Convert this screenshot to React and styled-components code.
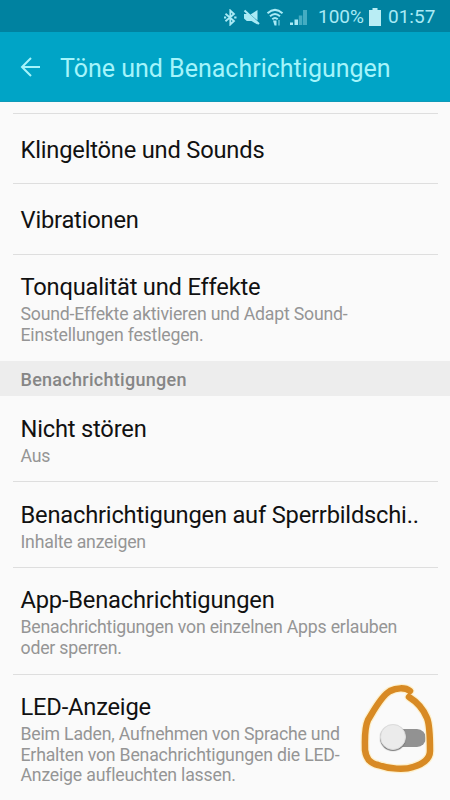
import React from 'react';
import styled, { createGlobalStyle } from 'styled-components';

const GlobalStyle = createGlobalStyle`
  *,
  *::before,
  *::after {
    box-sizing: border-box;
  }

  body {
    margin: 0;
    background: #fafafa;
    font-family: Roboto, 'Liberation Sans', sans-serif;
  }
`;

const StyledScreen = styled.div`
  display: flex;
  flex-direction: column;
  width: 450px;
  height: 800px;
  overflow: hidden;
  background: #fafafa;
`;

const StyledStatusBar = styled.header`
  display: flex;
  flex: none;
  align-items: center;
  justify-content: flex-end;
  height: 32px;
  padding: 2px 14px 0 0;
  background: #0082a0;
  color: #a9eaf5;
  font-size: 19px;
  line-height: 30px;

  svg {
    display: block;
    flex: none;
  }
`;

const StyledIcons = styled.div`
  display: flex;
  align-items: center;
  gap: 6px;
`;

const StyledStatusText = styled.span`
  width: ${({ $width }) => $width}px;
  margin-left: ${({ $gap }) => $gap}px;
  white-space: nowrap;
`;

const StyledAppBar = styled.div`
  display: flex;
  flex: none;
  align-items: center;
  height: 70px;
  padding: 1px 0 0 20px;
  background: #00a4c6;
  border-bottom: 1px solid #0f9ab8;
  color: #a5f4fb;

  svg {
    display: block;
    flex: none;
  }

  h1 {
    margin: 3px 0 0 19px;
    font-size: 25px;
    font-weight: 400;
    line-height: 30px;
    white-space: nowrap;
  }
`;

const StyledList = styled.ul`
  flex: none;
  margin: 0;
  padding: ${({ $pad }) => $pad || 0};
  list-style: none;
`;

const StyledRow = styled.li`
  display: flex;
  align-items: center;
  justify-content: space-between;
  margin: 0 12px 0 13px;
  padding: ${({ $single }) => ($single ? '21.6px 0 19.8px 7.5px' : '18.3px 0 14.7px 7.5px')};
  border-top: 1px solid ${({ $plain }) => ($plain ? 'transparent' : '#dedede')};
`;

const StyledText = styled.div`
  h2 {
    margin: 0;
    color: #111;
    font-size: 23.7px;
    font-weight: 400;
    letter-spacing: -0.2px;
    line-height: 28px;
    white-space: nowrap;
  }

  p {
    margin: 3px 0 0;
    color: #959595;
    font-size: 17.7px;
    letter-spacing: -0.2px;
    line-height: 20.7px;
    white-space: nowrap;
  }
`;

const StyledSection = styled.h3`
  flex: none;
  height: 35px;
  margin: 0;
  padding-left: 20.5px;
  background: #ededed;
  color: #868686;
  font-size: 18px;
  font-weight: 500;
  letter-spacing: 0.28px;
  line-height: 37px;
`;

const StyledSwitch = styled.div`
  position: relative;
  flex: none;
  width: 46px;
  height: 28px;
  margin: 0 12px 2px 0;
  padding: 5px 0 5px 12px;

  &::before {
    display: block;
    height: 18px;
    border-radius: 9px;
    background: #929292;
    content: '';
  }
`;

const StyledThumb = styled.span`
  position: absolute;
  top: 0;
  left: 0;
  width: 26px;
  height: 26px;
  border: 1px solid #dcdcdc;
  border-radius: 50%;
  background: #ebebeb;
  box-shadow: 0 1px 1px #777;
`;

const StyledScribble = styled.svg`
  position: absolute;
  top: -41px;
  left: -19px;
  overflow: visible;
`;

const StyledEnd = styled.div`
  flex: none;
  margin: 0 12px 0 13px;
  border-top: 1px solid #dedede;
`;

const BluetoothIcon = () => (
  <svg width="13" height="17" viewBox="0 0 13 17" fill="none" stroke="currentColor">
    <path d="M1.5 4.7 10 12 6.3 15.5V1.5L10 5 1.5 12.3" strokeWidth="1.8" />
    <path d="M0 8.5h2.2M10.2 8.5h2.3" strokeWidth="2" />
  </svg>
);

const MuteIcon = () => (
  <svg width="17" height="17" viewBox="0 0 17 17" fill="currentColor">
    <path d="M1 5h4L14.5 13.5V15.5L8.5 12H3.8L1 9.5Z" />
    <path d="M7.5 5.5 14.5 1v10.5Z" />
    <path d="M1.5 1.5 16 15" stroke="currentColor" strokeWidth="2" />
  </svg>
);

const WifiIcon = () => (
  <svg width="18" height="19" viewBox="0 0 18 19" fill="none" stroke="currentColor">
    <path d="M1.5 5.3q7.5-6.8 15 0M4 8.3q5-4.5 10 0M6.3 11.2q2.7-2.5 5.4 0" strokeWidth="2" />
    <path d="M7 12.5h3.5v5H8.5z" fill="currentColor" stroke="none" />
    <path d="M13 12v5.5" strokeWidth="2" opacity=".45" />
  </svg>
);

const SignalIcon = () => (
  <svg width="17" height="17" viewBox="0 0 17 17" fill="currentColor">
    <path d="M0 13.5h3V16H0zM4.5 10.5h3.5V16H4.5z" />
    <path d="M8.8 6.5h3.5V16H8.8zM13 1h4v15h-4z" opacity=".4" />
  </svg>
);

const BatteryIcon = () => (
  <svg width="12" height="18" viewBox="0 0 12 18" fill="#b9edf4">
    <path d="M3.5 0h5v2H12v16H0V2h3.5z" />
  </svg>
);

const BackIcon = () => (
  <svg width="21" height="20" viewBox="0 0 21 20" fill="none" stroke="currentColor">
    <path d="M11 1 2 10l9 9M2 10h18" strokeWidth="2" />
  </svg>
);

const loop =
  'M49 8C44 4 35 5 29 8C20 13 12 29 7 37C3 46 4 56 4 67C5 75 8 80 17 82C28 86 44 87 52 84C62 81 69 76 69 68C69 55 69 42 66 35C62 25 56 19 48 14';

const Scribble = () => (
  <StyledScribble width="76" height="92" viewBox="0 0 76 92" fill="none">
    <path d={loop} stroke="#fdf1cf" strokeWidth="9" strokeLinecap="round" />
    <path d={loop} stroke="#d88a24" strokeWidth="6.5" strokeLinecap="round" />
  </StyledScribble>
);

const sounds = [
  { title: 'Klingeltöne und Sounds' },
  { title: 'Vibrationen' },
  {
    title: 'Tonqualität und Effekte',
    lines: ['Sound-Effekte aktivieren und Adapt Sound-', 'Einstellungen festlegen.'],
  },
];

const notifications = [
  { title: 'Nicht stören', lines: ['Aus'], plain: true },
  { title: 'Benachrichtigungen auf Sperrbildschi..', lines: ['Inhalte anzeigen'] },
  {
    title: 'App-Benachrichtigungen',
    lines: ['Benachrichtigungen von einzelnen Apps erlauben', 'oder sperren.'],
  },
  {
    title: 'LED-Anzeige',
    lines: [
      'Beim Laden, Aufnehmen von Sprache und',
      'Erhalten von Benachrichtigungen die LED-',
      'Anzeige aufleuchten lassen.',
    ],
    toggle: true,
  },
];

const Row = ({ title, lines, plain, toggle }) => (
  <StyledRow $single={!lines} $plain={plain}>
    <StyledText>
      <h2>{title}</h2>
      {lines && (
        <p>
          {lines.map((line, i) => (
            <React.Fragment key={i}>
              {i > 0 && <br />}
              {line}
            </React.Fragment>
          ))}
        </p>
      )}
    </StyledText>
    {toggle && (
      <StyledSwitch>
        <StyledThumb />
        <Scribble />
      </StyledSwitch>
    )}
  </StyledRow>
);

const App = () => (
  <StyledScreen>
    <GlobalStyle />
    <StyledStatusBar>
      <StyledIcons>
        <BluetoothIcon />
        <MuteIcon />
        <WifiIcon />
        <SignalIcon />
      </StyledIcons>
      <StyledStatusText $width={51} $gap={11}>
        100%
      </StyledStatusText>
      <BatteryIcon />
      <StyledStatusText $width={48} $gap={7}>
        01:57
      </StyledStatusText>
    </StyledStatusBar>
    <StyledAppBar>
      <BackIcon />
      <h1>Töne und Benachrichtigungen</h1>
    </StyledAppBar>
    <StyledList $pad="11px 0 0.6px">
      {sounds.map(row => (
        <Row key={row.title} {...row} />
      ))}
    </StyledList>
    <StyledSection>Benachrichtigungen</StyledSection>
    <StyledList>
      {notifications.map(row => (
        <Row key={row.title} {...row} />
      ))}
    </StyledList>
    <StyledEnd />
  </StyledScreen>
);

export default App;
